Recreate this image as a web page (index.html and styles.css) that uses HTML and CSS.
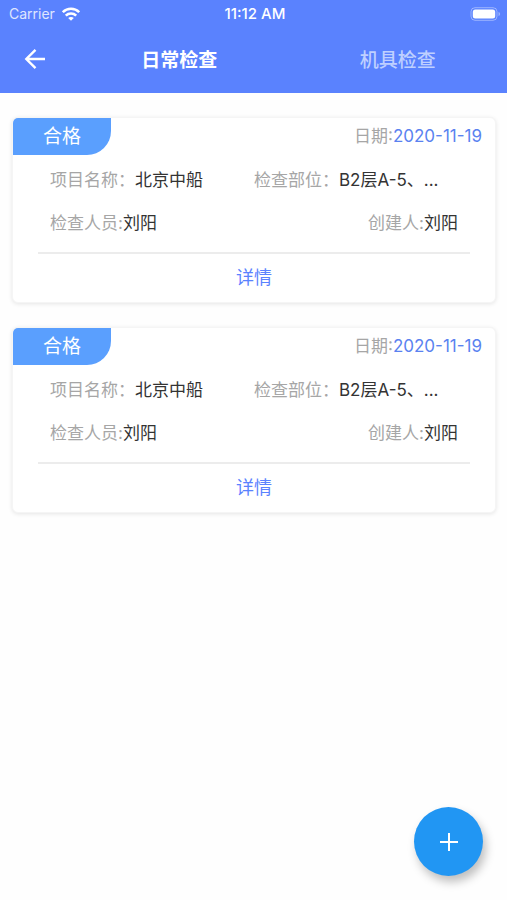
FILE: index.html
```html
<!DOCTYPE html>
<html lang="zh-CN">
<head>
<meta charset="utf-8">
<meta name="viewport" content="width=device-width, initial-scale=1">
<title>日常检查</title>
<link rel="stylesheet" href="styles.css">
</head>
<body>
<header class="header">
  <div class="status">
    <div class="carrier">
      <span>Carrier</span>
      <svg width="18" height="14" viewBox="0 0 18 14" fill="none" stroke="currentColor" stroke-width="2.6" aria-hidden="true">
        <path d="M.8 5.200C5.300.6 12.700.6 17.200 5.200"/>
        <path d="M3.800 8.600c2.900-2.800 7.500-2.800 10.400 0"/>
        <path d="M9 13.800L6.200 11c1.600-1.500 4-1.500 5.600 0z" fill="currentColor" stroke="none"/>
      </svg>
    </div>
    <time class="clock">11:12 AM</time>
    <svg class="battery" width="31" height="14" viewBox="0 0 31 14" aria-hidden="true">
      <rect x="1" y=".7" width="26" height="12.600" rx="4" fill="none" stroke="#fff" stroke-opacity=".4"/>
      <rect x="2.800" y="2.400" width="22.400" height="9.200" rx="2.500" fill="#fff"/>
      <path d="M28.500 5v4c1-.4 1.600-1.100 1.600-2s-.6-1.600-1.600-2z" fill="#fff" fill-opacity=".4"/>
    </svg>
  </div>
  <nav class="nav">
    <button class="back" type="button" aria-label="返回">
      <svg width="22" height="22" viewBox="0 0 22 22" fill="none" stroke="currentColor" stroke-width="2.400" aria-hidden="true">
        <path d="M21 11H3M11.500 1.800L2.300 11l9.200 9.200"/>
      </svg>
    </button>
    <a class="tab tab-active" href="#daily" aria-current="page">日常检查</a>
    <a class="tab" href="#tools">机具检查</a>
  </nav>
</header>
<main class="list" id="daily">
  <article class="card">
    <div class="card-top">
      <span class="tag">合格</span>
      <span class="date">日期:<time class="date-value">2020-11-19</time></span>
    </div>
    <dl class="fields">
      <div class="field"><dt>项目名称：</dt><dd>北京中船</dd></div>
      <div class="field"><dt>检查部位：</dt><dd>B2层A-5、...</dd></div>
      <div class="field"><dt>检查人员:</dt><dd>刘阳</dd></div>
      <div class="field field-end"><dt>创建人:</dt><dd>刘阳</dd></div>
    </dl>
    <a class="detail" href="#detail">详情</a>
  </article>
  <article class="card">
    <div class="card-top">
      <span class="tag">合格</span>
      <span class="date">日期:<time class="date-value">2020-11-19</time></span>
    </div>
    <dl class="fields">
      <div class="field"><dt>项目名称：</dt><dd>北京中船</dd></div>
      <div class="field"><dt>检查部位：</dt><dd>B2层A-5、...</dd></div>
      <div class="field"><dt>检查人员:</dt><dd>刘阳</dd></div>
      <div class="field field-end"><dt>创建人:</dt><dd>刘阳</dd></div>
    </dl>
    <a class="detail" href="#detail">详情</a>
  </article>
</main>
<button class="add" type="button" aria-label="新增">
  <svg width="18" height="18" viewBox="0 0 18 18" fill="none" stroke="currentColor" stroke-width="2" aria-hidden="true">
    <path d="M9 0v18M0 9h18"/>
  </svg>
</button>
</body>
</html>
```
FILE: styles.css
```css
* {
  box-sizing: border-box;
}

body {
  margin: 0;
  background: #fefefe;
  color: #333;
  font-family: Inter, "Noto Sans CJK SC", sans-serif;
  font-size: 17px;
}

a {
  color: inherit;
  text-decoration: none;
}

button {
  display: flex;
  align-items: center;
  justify-content: center;
  padding: 0;
  border: 0;
  background: none;
  color: #fff;
}

.header {
  background: #5a82fe;
  color: #fff;
}

.status {
  display: grid;
  grid-template-columns: 1fr auto 1fr;
  align-items: center;
  height: 27px;
  padding: 0 6px 0 9px;
  font-size: 14px;
}

.carrier {
  display: flex;
  align-items: center;
  gap: 7px;
  color: #fff;
}

.carrier span {
  opacity: 0.8;
}

.clock {
  font-size: 15px;
  font-weight: 500;
}

.battery {
  justify-self: end;
}

.nav {
  display: flex;
  height: 66px;
  padding-bottom: 3px;
}

.back {
  width: 70px;
}

.tab {
  flex: 1;
  display: flex;
  align-items: center;
  justify-content: center;
  font-size: 19px;
  font-weight: 500;
  color: #bfd0ff;
}

.tab-active {
  font-weight: 700;
  color: #fff;
}

.list {
  display: grid;
  gap: 24px;
  padding: 24px 11px 24px 12px;
}

.card {
  overflow: hidden;
  border: 1px solid #f5f5f5;
  border-radius: 6px;
  background: #fff;
  box-shadow: 0 1px 4px rgba(0, 0, 0, 0.1);
}

.card-top {
  display: flex;
  justify-content: space-between;
  padding-right: 13px;
}

.tag {
  width: 98px;
  border-bottom-right-radius: 24px;
  background: #5a9ffe;
  color: #fff;
  font-size: 19px;
  line-height: 37px;
  text-align: center;
}

.date {
  color: #a6a6a6;
  line-height: 36px;
}

.date-value {
  color: #5a82f0;
}

.fields {
  display: grid;
  grid-template-columns: 1fr 1fr;
  margin: 4px 25px 0;
  padding: 0 12px 7px;
  border-bottom: 2px solid #ececec;
  line-height: 43px;
}

.field {
  display: flex;
  white-space: nowrap;
}

.field-end {
  justify-content: flex-end;
}

dt {
  color: #a6a6a6;
}

dd {
  margin: 0;
}

.detail {
  display: block;
  color: #5a82fe;
  font-size: 18px;
  line-height: 48px;
  text-align: center;
}

.add {
  position: fixed;
  right: 24px;
  bottom: 24px;
  width: 69px;
  height: 69px;
  border-radius: 50%;
  background: #2196f3;
  box-shadow: 3px 6px 10px rgba(0, 0, 0, 0.25);
}
```
